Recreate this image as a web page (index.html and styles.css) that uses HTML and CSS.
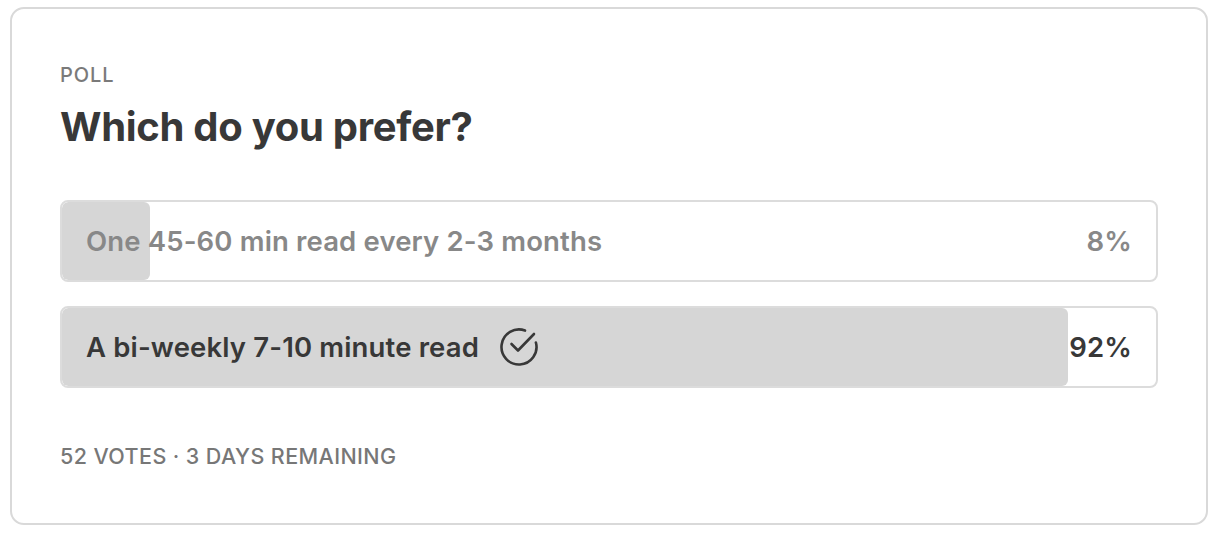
FILE: index.html
```html
<!DOCTYPE html>
<html>
<head>
<meta charset="utf-8">
<link rel="stylesheet" href="styles.css">
</head>
<body>
<div class="card">
  <div class="label">POLL</div>
  <h1 class="title">Which do you prefer?</h1>
  <div class="options">
    <div class="option">
      <div class="fill" style="width:8%"></div>
      <div class="opt-text">One 45-60 min read every 2-3 months</div>
      <div class="pct">8%</div>
    </div>
    <div class="option chosen">
      <div class="fill" style="width:92%"></div>
      <div class="opt-text">A bi-weekly 7-10 minute read
        <svg class="check" viewBox="0 0 40 40" width="40" height="40" fill="none" stroke="currentColor" stroke-width="2.6" stroke-linecap="round" stroke-linejoin="round"><path d="M25.99 3.56A17.5 17.5 0 1 0 36.9 15.47"/><path d="M12.5 17 19 23.5 35 7"/></svg>
      </div>
      <div class="pct">92%</div>
    </div>
  </div>
  <div class="footer">52 VOTES · 3 DAYS REMAINING</div>
</div>
</body>
</html>
```
FILE: styles.css
```css
* { box-sizing: border-box; }
html, body { margin: 0; padding: 0; background: #fff; }
body {
  font-family: Inter, "Noto Sans", sans-serif;
  padding: 7px 12px 0 10px;
}
.card {
  border: 2px solid #d9d9d9;
  border-radius: 14px;
  height: 518px;
  padding: 54px 48px 0 48px;
  display: flex;
  flex-direction: column;
}
.label {
  font-size: 20px;
  font-weight: 500;
  color: #7a7a7a;
  line-height: 24px;
  letter-spacing: 0.9px;
}
.title {
  margin: 16px 0 0 0;
  font-size: 40px;
  font-weight: 700;
  color: #383838;
  line-height: 48px;
  letter-spacing: -0.3px;
}
.options {
  margin-top: 49px;
  display: flex;
  flex-direction: column;
  gap: 24px;
}
.option {
  position: relative;
  height: 82px;
  border: 2px solid #dcdcdc;
  border-radius: 8px;
  display: flex;
  align-items: center;
  justify-content: space-between;
  padding: 0 24px;
  color: #888;
  font-size: 27.5px;
  font-weight: 600;
  letter-spacing: 0.15px;
  overflow: hidden;
}
.option.chosen { color: #383838; }
.fill {
  position: absolute;
  left: 0; top: 0; bottom: 0;
  background: #d6d6d6;
  border-radius: 6px;
}
.opt-text, .pct { position: relative; display: flex; align-items: center; gap: 20px; }
.check { color: #383838; }
.footer {
  margin-top: 55px;
  font-size: 21.5px;
  line-height: 26px;
  font-weight: 500;
  color: #777;
  letter-spacing: 0.4px;
}
```
